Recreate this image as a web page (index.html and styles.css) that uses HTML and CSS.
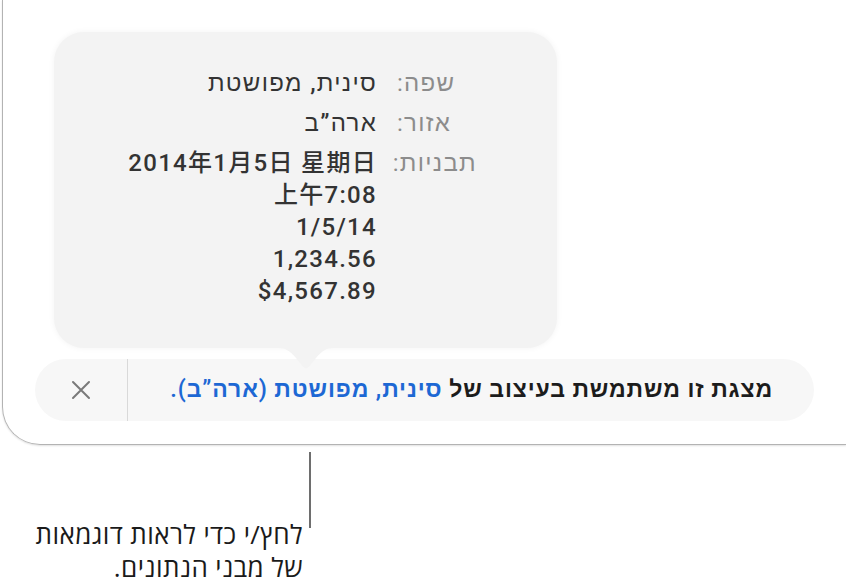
FILE: index.html
```html
<!DOCTYPE html>
<html lang="he">
<head>
  <meta charset="UTF-8">
  <meta name="viewport" content="width=device-width, initial-scale=1.0">
  <title>פורמט אזורי</title>
  <link rel="stylesheet" href="styles.css">
</head>
<body>
  <div class="window">
    <!-- חלונית דוגמאות הפורמט -->
    <div class="popover">
      <div class="formats" dir="rtl">
        <div class="label">שפה:</div>
        <div class="value">סינית, מפושטת</div>
        <div class="label">אזור:</div>
        <div class="value">ארה”ב</div>
        <div class="label">תבניות:</div>
        <div class="value">
          <div>2014年1月5日 星期日</div>
          <div>上午7:08</div>
          <div>1/5/14</div>
          <div>1,234.56</div>
          <div>$4,567.89</div>
        </div>
      </div>
      <svg class="popover-arrow" width="56" height="22" viewBox="0 0 56 22">
        <path d="M0 0 H56 C48 0 44 3 38 10 L31 18.5 Q28 22 25 18.5 L18 10 C12 3 8 0 0 0 Z" fill="#f3f3f3"/>
      </svg>
    </div>

    <!-- סרגל ההודעה -->
    <div class="notice">
      <button class="notice-close" aria-label="סגירה">
        <svg width="20" height="20" viewBox="0 0 20 20">
          <path d="M2 2 L18 18 M18 2 L2 18" stroke="#7a7a7a" stroke-width="2" stroke-linecap="round"/>
        </svg>
      </button>
      <div class="notice-text" dir="rtl">
        מצגת זו משתמשת בעיצוב של <a href="#" class="notice-link">סינית, מפושטת (ארה”ב)</a><span class="notice-link">.</span>
      </div>
    </div>
  </div>

  <div class="callout">
    <div class="callout-text" dir="rtl">לחץ/י כדי לראות דוגמאות<br>של מבני הנתונים.</div>
    <div class="callout-line"></div>
  </div>
</body>
</html>
```

FILE: styles.css
```css
body {
  margin: 0;
  width: 846px;
  height: 587px;
  overflow: hidden;
  background: #fff;
  font-family: Roboto, "Liberation Sans", "Noto Sans CJK SC", sans-serif;
}

.window {
  box-sizing: border-box;
  margin-left: 2px;
  width: 844px;
  height: 445px;
  padding-top: 32px;
  border-left: 1.5px solid #b3b3b3;
  border-bottom: 1.5px solid #b3b3b3;
  border-bottom-left-radius: 38px;
  box-shadow: 0 1px 2px rgba(0, 0, 0, 0.12);
}

.popover {
  position: relative;
  box-sizing: border-box;
  margin-left: 51px;
  width: 503px;
  height: 316px;
  padding: 35px 80px 0 0;
  background: #f3f3f3;
  border-radius: 30px;
  box-shadow: 0 0 6px rgba(0, 0, 0, 0.05);
}

.popover-arrow {
  position: absolute;
  left: 224px;
  top: 316px;
}

.formats {
  display: grid;
  grid-template-columns: 80px auto;
  justify-content: start;
  column-gap: 20px;
  row-gap: 8px;
  font-size: 24px;
  line-height: 32px;
  letter-spacing: 1.3px;
}

.label {
  color: #8c8c8c;
  text-align: left;
  white-space: nowrap;
}

.value {
  color: #333;
  font-weight: 500;
  text-align: right;
  white-space: nowrap;
}

.notice {
  display: flex;
  margin: 11px 0 0 32px;
  width: 779px;
  height: 62px;
  background: #f7f7f7;
  border-radius: 31px;
}

.notice-close {
  display: flex;
  align-items: center;
  justify-content: center;
  width: 93px;
  padding: 0;
  border: none;
  border-right: 1px solid #d9d9d9;
  background: transparent;
}

.notice-text {
  flex: 1;
  padding-right: 41px;
  font-size: 23px;
  font-weight: 600;
  letter-spacing: 0.9px;
  line-height: 62px;
  color: #1c1c1c;
}

.notice-link {
  color: #1d68d4;
  text-decoration: none;
}

.callout {
  display: flex;
  align-items: flex-start;
  margin: 7px 0 0 13px;
}

.callout-text {
  width: 290px;
  margin-top: 66px;
  font-family: "Open Sans", "Liberation Sans", sans-serif;
  font-size: 26px;
  line-height: 33px;
  letter-spacing: 0.4px;
  color: #1a1a1a;
  white-space: nowrap;
}

.callout-line {
  width: 2px;
  height: 76px;
  margin-left: 6px;
  background: #6e6e6e;
}
```
